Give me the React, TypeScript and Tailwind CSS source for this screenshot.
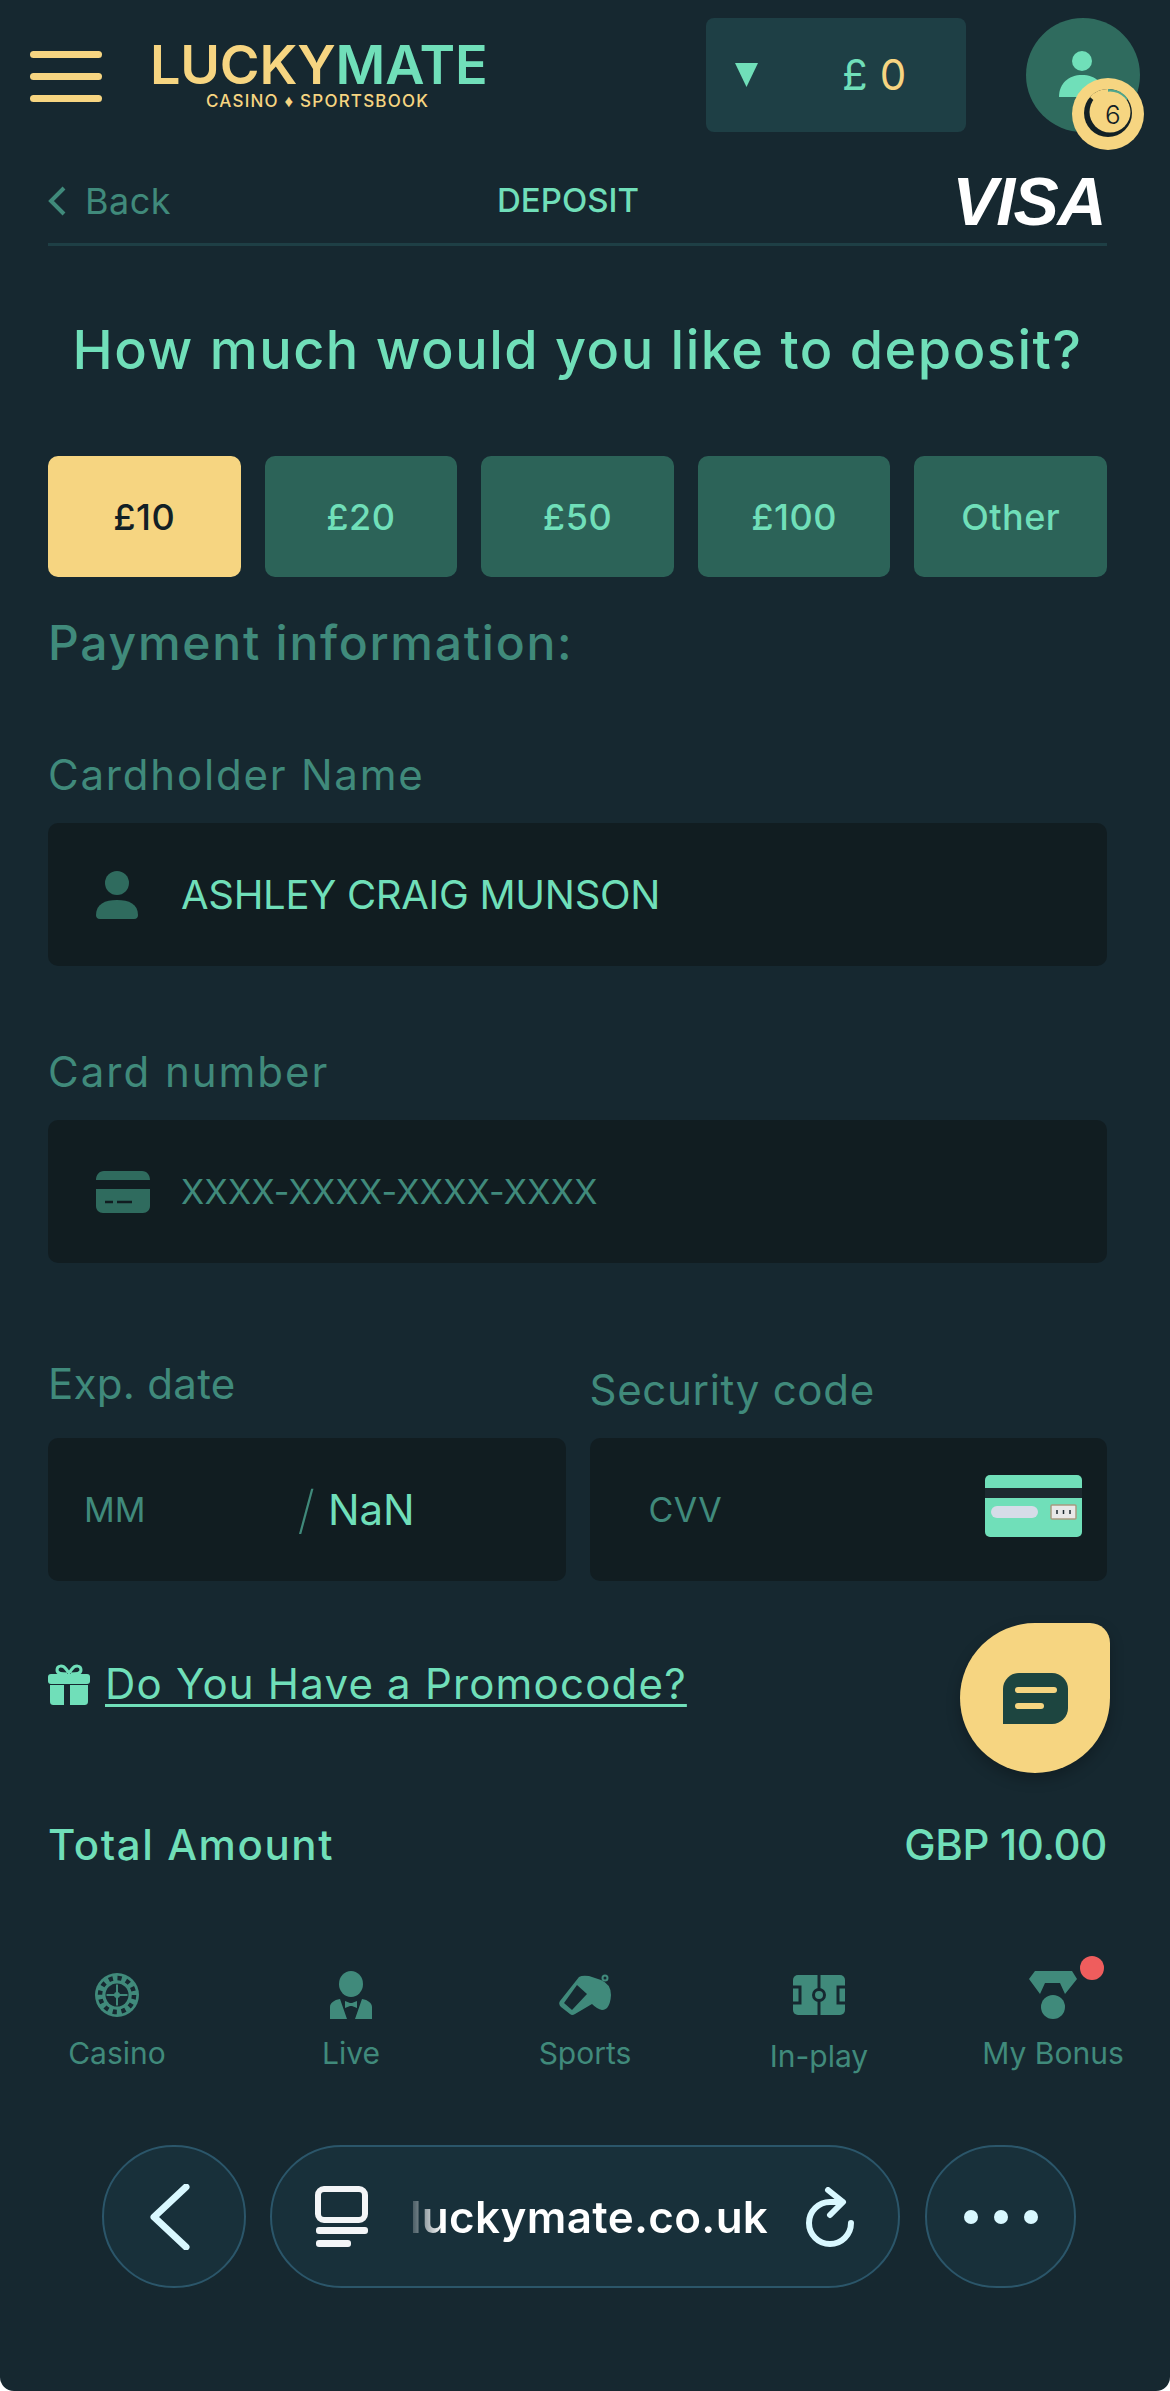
import React from "react";

const amounts = ["£10", "£20", "£50", "£100", "Other"];

const Casino = () => (
  <svg viewBox="0 0 46 46" className="w-[46px] h-[46px]">
    <circle cx="23" cy="23" r="22" fill="#408a7b" />
    <circle cx="23" cy="23" r="17" fill="none" stroke="#162830" strokeWidth="4.5" strokeDasharray="4.2 4.7" />
    <circle cx="23" cy="23" r="11.500" fill="#162830" />
    <path d="M23 12.500v21M12.500 23h21" stroke="#408a7b" strokeWidth="2" />
    <circle cx="23" cy="23" r="3" fill="#408a7b" />
  </svg>
);

const Live = () => (
  <svg viewBox="0 0 42 48" className="w-[42px] h-[48px]" fill="#408a7b">
    <ellipse cx="21" cy="13" rx="12" ry="13" />
    <path d="M0 48V36c0-4 4-7 10-8l7 20zM42 48V36c0-4-4-7-10-8l-7 20z" />
    <path d="M15 30l5 2h2l5-2v7l-5-2h-2l-5 2z" />
  </svg>
);

const Sports = () => (
  <svg viewBox="0 0 52 42" className="w-[52px] h-[42px]" fill="#408a7b">
    <path d="M20 3Q23 1 30 2L42 6Q52 10 52 21Q51 36 43 36Q38 35 33 30L16 40Q13 42 11 40L2 33Q-1 30 1 27Z" />
    <path d="M18 11L28 20L13 36L5 29Z" fill="#162830" />
    <circle cx="46" cy="4" r="2.500" fill="none" stroke="#408a7b" strokeWidth="2" />
  </svg>
);

const Pitch = () => (
  <svg viewBox="0 0 52 40" className="w-[52px] h-[40px]">
    <rect width="52" height="40" rx="5" fill="#408a7b" />
    <path d="M26 0v40" stroke="#162830" strokeWidth="3" />
    <circle cx="26" cy="20" r="5.500" fill="#408a7b" stroke="#162830" strokeWidth="3" />
    <path d="M0 12h7v16H0M52 12h-7v16h7" fill="none" stroke="#162830" strokeWidth="3" />
  </svg>
);

const Medal = () => (
  <svg viewBox="0 0 48 48" className="w-[48px] h-[48px]" fill="#408a7b">
    <path d="M6 0h37l5 8-12 15-5-11H16l-5 11L0 8z" />
    <path d="M18 13h13l-3 7h-7z" fill="#162830" />
    <circle cx="24" cy="36" r="12" />
  </svg>
);

const navItems = [
  { label: "Casino", icon: <Casino /> },
  { label: "Live", icon: <Live /> },
  { label: "Sports", icon: <Sports /> },
  { label: "In-play", icon: <Pitch /> },
  { label: "My Bonus", icon: <Medal /> },
];

export default function App() {
  return (
    <div className="relative w-[1170px] h-[2391px] overflow-hidden bg-[#162830] rounded-b-[14px] font-['Inter',sans-serif]">
      {/* header */}
      <header className="flex h-[150px] items-start pt-[18px] pl-[30px]">
        <div className="mt-[33px] flex w-[72px] flex-col gap-[15px]">
          <div className="h-[7px] rounded-full bg-[#f6d581]" />
          <div className="h-[7px] rounded-full bg-[#f6d581]" />
          <div className="h-[7px] rounded-full bg-[#f6d581]" />
        </div>
        <div className="ml-[48px] mt-[24px] w-[337px]">
          <div className="whitespace-nowrap text-[54px] leading-[46px] font-semibold tracking-[-0.2px]">
            <span className="text-[#f6d581]">LUCKY</span>
            <span className="text-[#70dfb9]">MATE</span>
          </div>
          <div className="mt-[3px] whitespace-nowrap pl-[56px] text-[17px] leading-[20px] font-medium tracking-[1.2px] text-[#f6d581]">
            CASINO ♦ SPORTSBOOK
          </div>
        </div>
        <div className="ml-[219px] flex h-[114px] w-[260px] items-center rounded-[8px] bg-[#1e3f45] pl-[29px]">
          <svg viewBox="0 0 23 24" className="h-[24px] w-[23px]" fill="#70dfb9">
            <path d="M0 0h23L11.500 24z" />
          </svg>
          <span className="ml-[84px] text-[42px] leading-none tracking-[1px] text-[#70dfb9]">£</span>
          <span className="ml-[11px] text-[42px] leading-none text-[#f6d581]">0</span>
        </div>
        <div className="relative ml-[60px] h-[114px] w-[114px] rounded-full bg-[#2f6b5e]">
          <svg viewBox="0 0 46 46" className="absolute left-[33px] top-[33px] h-[46px] w-[46px]" fill="#70dfb9">
            <circle cx="23" cy="10" r="10" />
            <path d="M0 46c0-14 10-22 23-22s23 8 23 22z" />
          </svg>
          <div className="absolute left-[46px] top-[60px] h-[72px] w-[72px]">
            <svg viewBox="0 0 72 72" className="h-full w-full">
              <circle cx="36" cy="36" r="36" fill="#f6d581" />
              <circle cx="36" cy="35" r="24" fill="#122025" />
              <path d="M36 11a24 24 0 0 1 20 10l-20 14z" fill="#4fa68d" />
              <path d="M36 11a24 24 0 0 0-18 8l18 16z" fill="#f6d581" />
              <circle cx="38" cy="34" r="20.500" fill="#f6d581" />
            </svg>
            <span className="absolute left-[33px] top-[22px] text-[26px] leading-[30px] font-light text-[#122025]">6</span>
          </div>
        </div>
      </header>

      <main className="pl-[48px] pr-[63px]">
        {/* back row */}
        <div className="relative flex h-[96px] items-center justify-between border-b-[3px] border-[#1e3f45] pt-[8px]">
          <div className="flex items-center gap-[19px] text-[36px] leading-[50px] tracking-[0.5px] text-[#408a7b]">
            <svg viewBox="0 0 18 30" className="h-[30px] w-[18px]" fill="none" stroke="#408a7b" strokeWidth="4">
              <path d="M16 2L3 15l13 13" />
            </svg>
            Back
          </div>
          <div className="absolute left-[449px] top-[25px] text-[33px] leading-[50px] font-medium text-[#70dfb9]">DEPOSIT</div>
          <div className="mr-[2px] font-['Liberation_Sans',sans-serif] text-[68px] leading-[60px] font-bold italic tracking-[-1.5px] text-white">VISA</div>
        </div>

        <h1 className="mt-[74px] whitespace-nowrap text-center text-[54px] leading-[60px] font-medium tracking-[1.5px] text-[#70dfb9]">
          How much would you like to deposit?
        </h1>

        {/* amounts */}
        <div className="mt-[76px] grid grid-cols-5 gap-[24px]">
          {amounts.map((a, i) => (
            <div
              key={a}
              className={
                i === 0
                  ? "flex h-[121px] items-center justify-center rounded-[10px] bg-[#f6d581] text-[36px] font-medium tracking-[0.5px] text-[#122025]"
                  : "flex h-[121px] items-center justify-center rounded-[10px] bg-[#2c6358] text-[36px] font-medium tracking-[0.5px] text-[#70dfb9]"
              }
            >
              {a}
            </div>
          ))}
        </div>

        <h2 className="mt-[36px] text-[48px] leading-[60px] font-medium tracking-[1.75px] text-[#408a7b]">Payment information:</h2>

        <label className="mt-[77px] block text-[42px] leading-[50px] tracking-[1.8px] text-[#408a7b]">Cardholder Name</label>
        <div className="mt-[23px] flex h-[143px] items-center rounded-[10px] bg-[#111d21] pl-[48px]">
          <svg viewBox="0 0 42 48" className="h-[48px] w-[42px]" fill="#2f6b5e">
            <circle cx="21" cy="12" r="12" />
            <path d="M0 44c0-11 9-15 21-15s21 4 21 15c0 2-1 4-4 4H4c-3 0-4-2-4-4z" />
          </svg>
          <span className="ml-[43px] text-[40px] leading-[50px] tracking-[-0.3px] text-[#70dfb9]">ASHLEY CRAIG MUNSON</span>
        </div>

        <label className="mt-[81px] block text-[42px] leading-[50px] tracking-[2px] text-[#408a7b]">Card number</label>
        <div className="mt-[23px] flex h-[143px] items-center rounded-[10px] bg-[#111d21] pl-[48px]">
          <svg viewBox="0 0 54 42" className="h-[42px] w-[54px]">
            <path d="M0 9c0-5 3-9 8-9h38c5 0 8 4 8 9H0zM0 18h54v17c0 4-3 7-7 7H7c-4 0-7-3-7-7z" fill="#2f6b5e" />
            <path d="M9 31h8M21 31h15" stroke="#111d21" strokeWidth="2.500" />
          </svg>
          <span className="ml-[31px] text-[34px] leading-[50px] tracking-[0.3px] text-[#408a7b]">XXXX-XXXX-XXXX-XXXX</span>
        </div>

        {/* expiry and cvv */}
        <div className="mt-[96px] grid grid-cols-2 gap-[24px]">
          <div>
            <label className="mb-[29px] block text-[42px] leading-[50px] tracking-[0.3px] text-[#408a7b]">Exp. date</label>
            <div className="flex h-[143px] items-center rounded-[10px] bg-[#111d21] pl-[36px]">
              <span className="text-[34px] text-[#408a7b]">MM</span>
              <span className="ml-[152px] text-[52px] font-extralight text-[#408a7b]">/</span>
              <span className="ml-[13px] text-[42px] text-[#70dfb9]">NaN</span>
            </div>
          </div>
          <div>
            <label className="mb-[23px] mt-[6px] block text-[42px] leading-[50px] tracking-[0.7px] text-[#408a7b]">Security code</label>
            <div className="flex h-[143px] items-center justify-between rounded-[10px] bg-[#111d21] pl-[59px] pr-[25px]">
              <span className="text-[34px] tracking-[0.5px] text-[#408a7b]">CVV</span>
              <svg viewBox="0 0 97 62" className="mb-[8px] h-[62px] w-[97px]">
                <rect width="97" height="62" rx="5" fill="#70dfb9" />
                <rect y="13" width="97" height="10" fill="#1d2a30" />
                <rect x="6" y="31" width="47" height="12" rx="6" fill="#d6dce8" />
                <rect x="66" y="30" width="25" height="14" rx="1" fill="#e8e8e8" stroke="#a89a80" strokeWidth="1.500" />
                <path d="M72 35v4M78.500 35v4M85 35v4" stroke="#1d2a30" strokeWidth="1.500" />
              </svg>
            </div>
          </div>
        </div>

        <div className="mt-[78px] flex items-center gap-[15px]">
          <svg viewBox="0 0 42 41" className="h-[41px] w-[42px]" fill="#70dfb9">
            <path d="M19 10C14 10 9 10 9 6C9 1 15 1 18 5L21 9L24 5C27 1 33 1 33 6C33 10 28 10 23 10" fill="none" stroke="#70dfb9" strokeWidth="3" />
            <rect y="10" width="42" height="10" rx="3" />
            <path d="M2 21h14v20H6c-3 0-4-1-4-4zM22 21h18v16c0 3-1 4-4 4H22z" />
          </svg>
          <span className="text-[42px] leading-[50px] tracking-[1.2px] text-[#70dfb9] underline decoration-[3px] underline-offset-[5px]">
            Do You Have a Promocode?
          </span>
        </div>

        <div className="mt-[111px] flex items-center justify-between text-[42px] leading-[50px] font-medium text-[#70dfb9]">
          <span className="tracking-[1.6px]">Total Amount</span>
          <span className="tracking-[-0.4px]">GBP 10.00</span>
        </div>
      </main>

      {/* chat button */}
      <div className="absolute left-[960px] top-[1623px] flex h-[150px] w-[150px] items-center justify-center rounded-[75px] rounded-tr-[20px] bg-[#f6d581] shadow-[0_6px_14px_rgba(0,0,0,0.25)]">
        <div className="flex h-[51px] w-[65px] flex-col justify-center gap-[10px] rounded-[16px] rounded-bl-none bg-[#1d4540] pl-[12px]">
          <div className="h-[6px] w-[42px] rounded-full bg-[#f6d581]" />
          <div className="h-[6px] w-[29px] rounded-full bg-[#f6d581]" />
        </div>
      </div>

      {/* bottom nav */}
      <nav className="mt-[100px] grid grid-cols-5">
        {navItems.map((item) => (
          <div key={item.label} className="relative flex flex-col items-center">
            <div className="flex h-[50px] items-center justify-center">{item.icon}</div>
            <span className={item.label === "In-play" ? "mt-[16px] text-[30px] leading-[40px] text-[#408a7b]" : "mt-[13px] text-[30px] leading-[40px] text-[#408a7b]"}>
              {item.label}
            </span>
            {item.label === "My Bonus" && (
              <div className="absolute left-[144px] top-[-14px] h-[24px] w-[24px] rounded-full bg-[#ef5d5d]" />
            )}
          </div>
        ))}
      </nav>

      {/* browser bar */}
      <div className="absolute left-[102px] top-[2145px] flex items-center">
        <div className="flex h-[143px] w-[144px] items-center justify-center rounded-full border-2 border-[#2b566a] bg-[#18303a]">
          <svg viewBox="0 0 40 66" className="mr-[8px] h-[66px] w-[40px]" fill="none" stroke="#d9f8ff" strokeWidth="7" strokeLinecap="round" strokeLinejoin="round">
            <path d="M36 3L4 33l32 30" />
          </svg>
        </div>
        <div className="ml-[24px] flex h-[143px] w-[630px] items-center rounded-full border-2 border-[#2b566a] bg-[#18303a] pl-[43px] pr-[42px]">
          <svg viewBox="0 0 53 61" className="h-[61px] w-[53px]">
            <rect x="3" y="3" width="47" height="31" rx="6" fill="none" stroke="#f3f5f7" strokeWidth="6" />
            <rect x="1" y="41" width="52" height="7" rx="3" fill="#f3f5f7" />
            <rect x="1" y="54" width="35" height="7" rx="3" fill="#f3f5f7" />
          </svg>
          <span className="ml-[42px] bg-[linear-gradient(90deg,rgba(255,255,255,0.15)_0px,#ffffff_32px)] bg-clip-text text-[44px] leading-[60px] font-semibold tracking-[0.3px] text-transparent">
            luckymate.co.uk
          </span>
          <svg viewBox="0 0 52 60" className="ml-auto h-[60px] w-[52px]" fill="none" stroke="#d9f8ff" strokeWidth="6" strokeLinecap="round" strokeLinejoin="round">
            <path d="M38 15H26A21 21 0 1 0 47 36" />
            <path d="M24 3L39 15L26 28" />
          </svg>
        </div>
        <div className="ml-[25px] flex h-[143px] w-[151px] items-center justify-center gap-[16px] rounded-full border-2 border-[#2b566a] bg-[#18303a]">
          <div className="h-[14px] w-[14px] rounded-full bg-[#d9f8ff]" />
          <div className="h-[14px] w-[14px] rounded-full bg-[#d9f8ff]" />
          <div className="h-[14px] w-[14px] rounded-full bg-[#d9f8ff]" />
        </div>
      </div>
    </div>
  );
}
